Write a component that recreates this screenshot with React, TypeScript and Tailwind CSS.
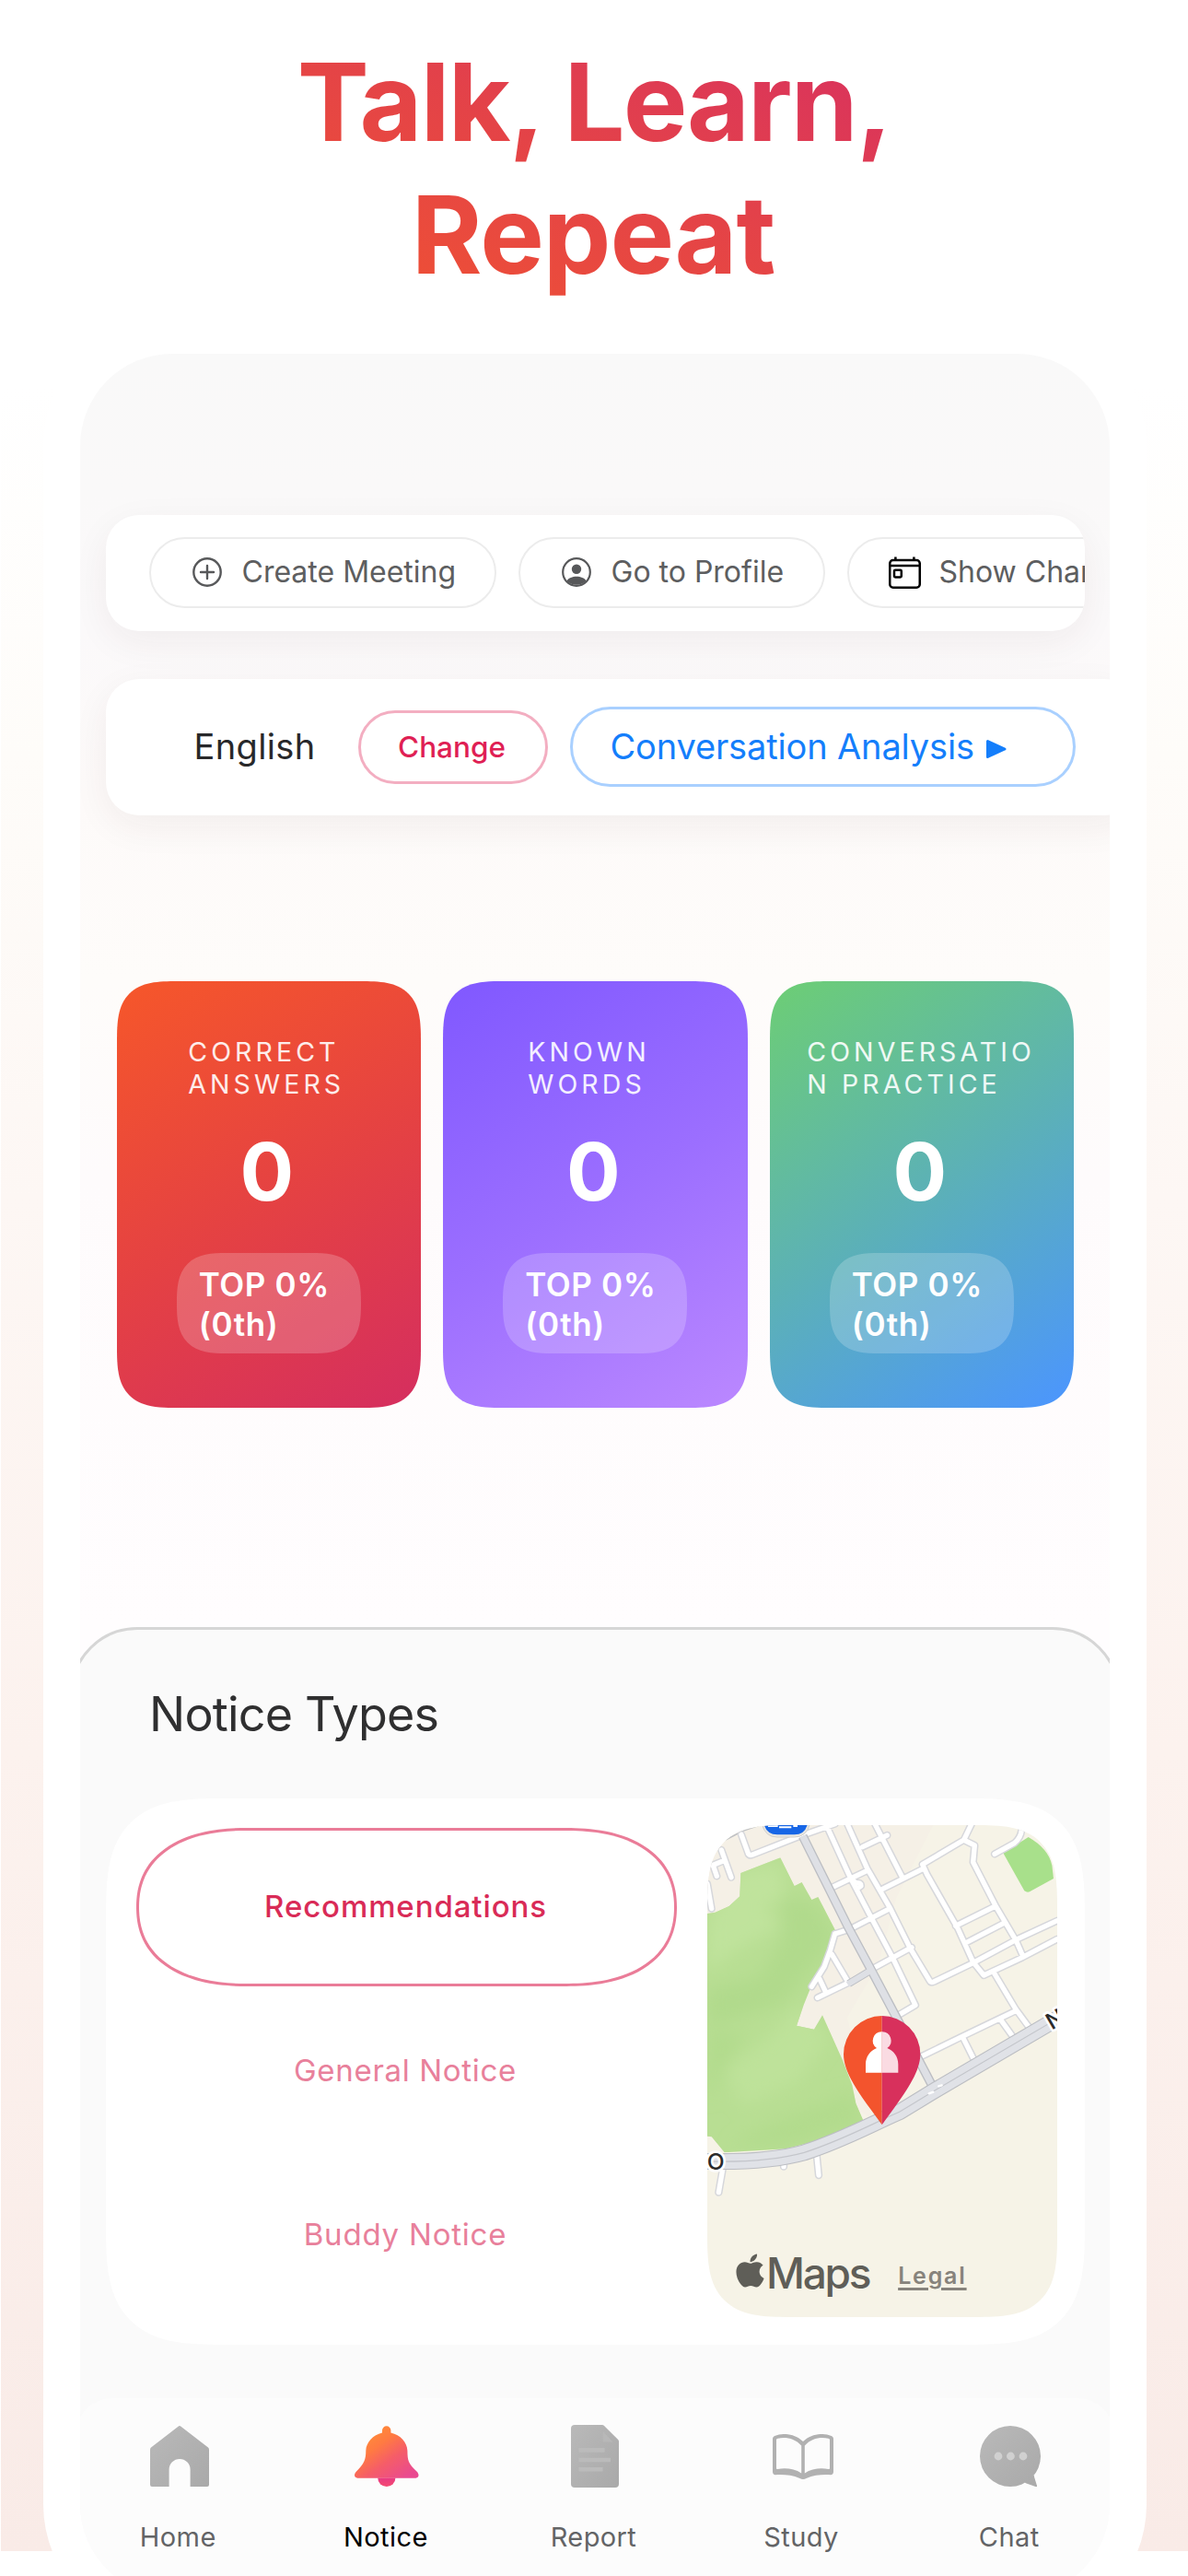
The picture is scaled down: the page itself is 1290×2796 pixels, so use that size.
import React, { type ReactNode } from 'react';
import { FaApple } from 'react-icons/fa';

const GRAY_STOPS = (
  <>
    <stop offset="0" stopColor="#b9b9b9" />
    <stop offset="1" stopColor="#a9a9a9" />
  </>
);

function PlusCircle() {
  return (
    <svg viewBox="0 0 32 32" className="size-8 shrink-0" fill="none" stroke="#57585a" strokeWidth="2.4">
      <circle cx="16" cy="16" r="14.7" />
      <path d="M16 9v14M9 16h14" strokeLinecap="round" />
    </svg>
  );
}

function ProfileCircle() {
  return (
    <svg viewBox="0 0 32 32" className="size-8 shrink-0">
      <circle cx="16" cy="16" r="14.8" fill="none" stroke="#57585a" strokeWidth="2.2" />
      <circle cx="16" cy="12.8" r="5.2" fill="#57585a" />
      <path d="M5.500 25.400C7.400 22.400 11.600 20.800 16 20.800s8.600 1.600 10.500 4.600A14.800 14.800 0 0 1 5.500 25.400z" fill="#57585a" />
    </svg>
  );
}

function CalendarIcon() {
  return (
    <svg viewBox="0 0 35 35" className="size-[35px] shrink-0" fill="none" stroke="#000" strokeWidth="2.5">
      <rect x="1.250" y="4" width="32.500" height="29.700" rx="3.500" />
      <path d="M1.500 10h32M7.400.5V4M27.400.5V4" />
      <rect x="6" y="14.800" width="7.800" height="7.600" rx="1.200" />
    </svg>
  );
}

function HomeIcon() {
  return (
    <svg viewBox="0 0 64 66" className="h-[66px] w-16">
      <defs>
        <linearGradient id="home" x1="0" y1="0" x2="1" y2="1">{GRAY_STOPS}</linearGradient>
      </defs>
      <path
        fill="url(#home)"
        d="M30.500.800a2.200 2.200 0 0 1 3 0L63 23.500q1 .8 1 2.500V64q0 2-2 2H43.600V47.500a11.500 11.500 0 0 0-23 0V66H2q-2 0-2-2V26q0-1.700 1-2.500z"
      />
    </svg>
  );
}

function BellIcon() {
  return (
    <svg viewBox="0 0 70 66" className="h-[66px] w-[70px]">
      <defs>
        <linearGradient id="bell" x1="0.15" y1="0.15" x2="0.85" y2="0.95">
          <stop offset="0" stopColor="#ff8d38" />
          <stop offset="0.3" stopColor="#ff7a42" />
          <stop offset="0.6" stopColor="#f55d68" />
          <stop offset="1" stopColor="#e94a90" />
        </linearGradient>
        <linearGradient id="clapper" x1="0" y1="0" x2="0" y2="1">
          <stop offset="0" stopColor="#e83a82" />
          <stop offset="1" stopColor="#f54a72" />
        </linearGradient>
      </defs>
      <path d="M25.200 56.500h19.200a9.600 9.500 0 0 1-19.200 0z" fill="url(#clapper)" />
      <path
        fill="url(#bell)"
        d="M30 7.600V5a4.700 4.700 0 0 1 9.400 0v2.600C50 10 57 18 57.400 27c.1 11 1.100 14 10.100 22.500 3.500 3.500 2 7.200-1 7.200H3.200C0 56.700-1.500 53 2 49.500 10.500 41 12.200 37 12.300 27 12.600 18 20 10 30 7.600z"
      />
    </svg>
  );
}

function ReportIcon() {
  return (
    <svg viewBox="0 0 52 68" className="h-[68px] w-[52px]">
      <defs>
        <linearGradient id="doc" x1="0" y1="0" x2="1" y2="1">{GRAY_STOPS}</linearGradient>
      </defs>
      <path fill="url(#doc)" d="M4 0h30q1 0 1.800.700L51.200 16q.8.800.8 2v46q0 4-4 4H4q-4 0-4-4V4q0-4 4-4z" />
      <path fill="#bbb" fillOpacity=".7" d="M34.700 7v11.500h10.800z" />
      <path stroke="#bbb" strokeWidth="4.600" d="M8.500 27.400h28M8.500 38h34.500M8.500 48.200h26" />
    </svg>
  );
}

function StudyIcon() {
  return (
    <svg viewBox="0 0 66 49" className="h-[49px] w-[66px]">
      <path
        fill="#b1b1b1"
        fillRule="evenodd"
        d="M0 5c0-1.500 1-2.400 2.200-3C12-1.800 24-.500 33 8 42-.500 54-1.800 63.800 2 65 2.600 66 3.500 66 5v36c0 2-1.200 3.200-3 3.200-9-.4-18 0-26.500 3.800-2 1.200-5 1.200-7 0C21 44.200 12 43.800 3 44.200 1.200 44.200 0 43 0 41zM4 6.500V37c0 .6.500 1.100 1.500 1C14 36.500 24 37.500 31.200 42.500v-30C24 4.500 14 2.800 5.500 4.800 4.600 5 4 5.500 4 6.500zM62 6.500V37c0 .6-.5 1.100-1.500 1-8.500-1.500-18.500-.500-25.700 4.500v-30C42 4.500 52 2.800 60.500 4.800 61.400 5 62 5.500 62 6.500z"
      />
    </svg>
  );
}

function ChatIcon() {
  return (
    <svg viewBox="0 0 66 66" className="size-[66px]">
      <defs>
        <linearGradient id="chat" x1="0" y1="0" x2="1" y2="1">{GRAY_STOPS}</linearGradient>
      </defs>
      <path
        fill="url(#chat)"
        d="M33 0A33 33 0 1 1 33 66 33 33 0 0 1 33 0zM59.200 53.500q-.4 1.500 0 2.500l2.800 9q.3 1.500-1.200 1.100L50.500 62.400l-2-.800z"
      />
      <g fill="#d0d0d0">
        <circle cx="20" cy="33" r="4.400" />
        <circle cx="33.400" cy="33" r="4.400" />
        <circle cx="47" cy="33" r="4.400" />
      </g>
    </svg>
  );
}

const STREETS =
  'M195 95L218 158Q222 164 232 160L385 100 500 60' +
  'M130 145L162 234M100 195L142 178M103 195L115 230M84 255L98 336' +
  'M470 60L550 235 610 350 690 500 762 650 706 683' +
  'M540 60L605 205 680 335 745 465 808 570Q812 578 822 574L945 515 1090 437 1224 375' +
  'M630 60L720 235M590 135L670 97M488 268L605 212M655 272L785 207' +
  'M785 192L920 112 945 60' +
  'M785 192L800 225 900 400 950 510 985 553 1110 495 1224 435' +
  'M925 115L955 130 950 185 1025 330 1090 440 1112 490' +
  'M893 392L1022 328M925 448L1050 383' +
  'M1020 158L1085 122Q1105 105 1108 80' +
  'M500 418L548 403 680 335M625 530L750 462' +
  'M500 418L485 470 465 525 424 590M490 485L540 570M450 565L470 608M443 626L542 578' +
  'M1020 548L1090 665 1132 722M780 818L915 752 1090 668M915 752L950 822M1038 695L1076 748' +
  'M555 240L568 252Q585 250 585 262L576 268' +
  'M135 1180L121 1260M440 1135L447 1204M333 1160V1176';

const HIGHWAY = 'M60 1158C200 1163 320 1152 400 1130C520 1092 620 1037 710 998L830 925 1240 685';

function MapPreview() {
  return (
    <div className="relative h-[534px] w-[380px] overflow-hidden rounded-[90px] bg-[#f6f3e7] [corner-shape:superellipse(1.6)]">
      <svg viewBox="84 64 1140 1602" className="block size-full">
        <defs>
          <filter id="soft" x="-20%" y="-20%" width="140%" height="140%">
            <feGaussianBlur stdDeviation="26" />
          </filter>
          <clipPath id="park">
            <path d="M84 352L110 348 155 328 190 296 193 220 322 170 368 262 392 250 424 307 445 298 504 412 485 470 465 525 418 600 398 650 375 717 432 729 459 683 525 830 556 910 568 970 594 1030 470 1085 340 1118 140 1130 98 1079 84 1077z" />
          </clipPath>
        </defs>
        <path fill="#f5f0e6" d="M84 64H820L700 300 640 520 540 690 620 1020 520 960 200 600 84 360z" />
        <g clipPath="url(#park)">
          <rect x="84" y="160" width="520" height="980" fill="#b8de93" />
          <g filter="url(#soft)">
            <path fill="#c0e39c" d="M190 210L320 190 340 300 260 330 330 390 180 470 84 540V380z" />
            <path fill="#b1da8c" d="M330 290L440 320 500 430 400 560 340 640 160 700 84 720V600L250 560 330 440z" />
            <path fill="#bee29a" d="M380 650L480 760 380 900 200 980 140 860 280 760z" />
            <path fill="#b2db8d" d="M84 740L210 740 120 900 84 960zM380 1000L560 930 590 1040 330 1110 160 1110 240 1060z" />
          </g>
        </g>
        <path fill="#a8e08b" d="M1048 155L1130 103Q1195 140 1207 195L1212 238 1134 281Q1126 285 1117 278z" />
        <g fill="none" strokeLinejoin="round">
          <path d="M84 140Q150 110 200 82L270 58" stroke="#bfc1c5" strokeWidth="6" />
          <path d={STREETS} stroke="#d6d7db" strokeWidth="25" strokeLinecap="round" />
          <path d={STREETS} stroke="#fff" strokeWidth="16" strokeLinecap="round" />
          <path d="M545 580L615 538" stroke="#bcbec3" strokeWidth="25" />
          <path d="M395 100L545 400 615 530 700 690 818 915" stroke="#bcbec3" strokeWidth="30" />
          <path d="M541 582L615 538" stroke="#dee0e5" strokeWidth="19" />
          <path d="M395 100L545 400 615 530 700 690 818 915" stroke="#dee0e5" strokeWidth="22" />
          <path d={HIGHWAY} stroke="#bcbec3" strokeWidth="54" />
          <path d={HIGHWAY} stroke="#e0e2e7" strokeWidth="47" />
          <path d={HIGHWAY} stroke="#c4c6cb" strokeWidth="3.500" />
          <path d="M806 938L820 933M838 914L848 911" stroke="#fff" strokeWidth="7" strokeLinecap="round" />
        </g>
        <path d="M262 60H418Q408 103 368 103H312Q272 103 262 60z" fill="#e9e7e2" stroke="#d2d0cc" strokeWidth="3" />
        <path d="M268 60H411Q402 95 368 95H312Q278 95 268 60z" fill="#1766e6" />
        <path d="M282 67h32M318 71h40M364 67h14" stroke="#fff" strokeWidth="6" />
        <g
          fontFamily="Inter, sans-serif"
          fontWeight="500"
          fontSize="74"
          fill="#2b2b2b"
          stroke="#fff"
          strokeWidth="16"
          strokeLinejoin="round"
          paintOrder="stroke"
        >
          <text x="83" y="1185">O</text>
          <text x="1206" y="732" transform="rotate(-30 1206 732)">N</text>
        </g>
        <path fill="#f3542d" d="M653 685A125 125 0 0 0 528 810C528 880 600 965 653 1040z" />
        <path fill="#d8305c" d="M653 685A125 125 0 0 1 778 810C778 880 706 965 653 1040z" />
        <path fill="#fff" d="M653 737a29 29 0 0 0-17 53C615 798 600 818 600 843v27h53z" />
        <path fill="#fadbe2" d="M653 737a29 29 0 0 1 17 53C691 798 706 818 706 843v27h-53z" />
      </svg>
      <div className="absolute bottom-6 left-[31px] flex h-12 items-center">
        <FaApple className="h-[41px] w-[31px] -translate-y-[3px] text-[#5f5e58]" />
        <span className="ml-[2px] text-[46px] leading-none font-medium tracking-[-2.3px] text-[#5f5e58]">Maps</span>
        <span className="mt-[7px] ml-[31px] text-[25px] leading-none font-semibold tracking-[1.8px] text-[#87837c] underline decoration-[3px] underline-offset-[4px]">
          Legal
        </span>
      </div>
    </div>
  );
}

function Chip({ icon, label, className }: { icon: ReactNode; label: string; className: string }) {
  return (
    <div
      className={`flex h-[77px] shrink-0 items-center rounded-full border-2 border-[#ececec] text-[32px] whitespace-nowrap text-[#5d5e60] ${className}`}
    >
      {icon}
      <span>{label}</span>
    </div>
  );
}

const STATS = [
  { lines: ['CORRECT', 'ANSWERS'], width: 'w-[175px]', fill: 'bg-linear-[150deg] from-[#f6572a] via-[#e54242] to-[#d52e5f]' },
  { lines: ['KNOWN', 'WORDS'], width: 'w-[146px]', fill: 'bg-linear-[150deg] from-[#8058ff] via-[#9b6eff] to-[#bb88ff]' },
  { lines: ['CONVERSATIO', 'N PRACTICE'], width: 'w-[249px]', fill: 'bg-linear-[145deg] from-[#6dce74] via-[#5cb1b6] to-[#4b95ff]' },
];

function StatCard({ lines, width, fill }: (typeof STATS)[number]) {
  return (
    <div
      className={`flex h-[463px] w-[330.5px] flex-col items-center rounded-[66px] pt-[60px] text-white [corner-shape:superellipse(1.6)] ${fill}`}
    >
      <div className={`text-[28.5px] leading-[34.7px] tracking-[4.1px] whitespace-nowrap text-white/90 ${width}`}>
        {lines[0]}
        <br />
        {lines[1]}
      </div>
      <div className="mt-[30px] mr-[4px] text-[87px] leading-[96px] font-bold">0</div>
      <div className="mt-[40px] h-[109px] w-[200px] rounded-[54px] bg-white/20 pt-[13px] pl-[24px] text-[35px] leading-[42.3px] font-semibold tracking-[0.6px] whitespace-nowrap [corner-shape:superellipse(1.5)]">
        TOP 0%
        <br />
        (0th)
      </div>
    </div>
  );
}

const TABS = [
  { label: 'Home', icon: <HomeIcon />, active: false },
  { label: 'Notice', icon: <BellIcon />, active: true },
  { label: 'Report', icon: <ReportIcon />, active: false },
  { label: 'Study', icon: <StudyIcon />, active: false },
  { label: 'Chat', icon: <ChatIcon />, active: false },
];

export default function App() {
  return (
    <main className="flex h-[2796px] w-[1290px] flex-col items-center overflow-hidden bg-[linear-gradient(to_bottom,#fff_0px,#fff_420px,#fefcf9_820px,#fdf7f4_1300px,#fcf2ee_1900px,#f9ebe7_2769px,#fff_2769px)] font-['Inter',sans-serif] shadow-[inset_1px_0_0_#fff]">
      <h1 className="mt-[39px] h-[305px] shrink-0 text-center text-[117px] leading-[143.6px] font-bold whitespace-nowrap">
        <span className="inline-block bg-linear-to-tr from-[#f0522f] via-[#e44347] to-[#d82f5f] bg-clip-text text-transparent">
          <span className="tracking-[-1.75px]">Talk, Learn,</span>
          <br />
          <span className="mr-[2px] tracking-[-1px]">Repeat</span>
        </span>
      </h1>

      <div className="ml-[2px] h-[2514px] w-[1198px] shrink-0 rounded-[140px] bg-white p-10">
        <div className="flex h-[2434px] flex-col overflow-hidden rounded-[100px] bg-[linear-gradient(to_bottom,#f9f9f9_0px,#faf9f9_150px,#fbf9fa_300px,#fdfaf9_480px,#fefcfa_680px,#fefbfc_900px,#fffdfe_1380px)]">
          <div className="mt-[175px] ml-[27.5px] flex h-[126px] w-[1063.5px] shrink-0 items-center gap-6 overflow-hidden rounded-[36px] bg-white pb-[2px] pl-[47px] shadow-[0_12px_40px_rgba(60,40,30,0.06)]">
            <Chip icon={<PlusCircle />} label="Create Meeting" className="w-[377px] gap-[22px] pl-[45px]" />
            <Chip icon={<ProfileCircle />} label="Go to Profile" className="w-[333px] gap-[22px] pl-[45px]" />
            <Chip icon={<CalendarIcon />} label="Show Chart" className="w-[320px] gap-[20px] pl-[43px]" />
          </div>

          <div className="mt-[52px] ml-[27.5px] flex h-[148px] w-[1120px] shrink-0 items-center rounded-[36px] bg-white pb-px pl-[96px] shadow-[0_12px_40px_rgba(60,40,30,0.06)]">
            <span className="w-[178px] text-[38px] tracking-[0.37px] text-[#28282a]">English</span>
            <span className="flex h-20 w-[206px] items-center justify-center rounded-full border-[3px] border-[#f3aec1] pr-[2px] text-[31.5px] font-[450] text-[#df1f54]">
              Change
            </span>
            <span className="ml-6 flex h-[87px] w-[549px] items-center rounded-full border-[3px] border-[#a9d0ff] pl-[41px] text-[38px] tracking-[-0.15px] whitespace-nowrap text-[#147efb]">
              Conversation Analysis
              <svg viewBox="0 0 22 22" className="mt-[5px] ml-[13px] size-[22px]" fill="currentColor">
                <path
                  d="M1.500 2.500L20 11 1.500 19.500z"
                  stroke="currentColor"
                  strokeWidth="3"
                  strokeLinejoin="round"
                />
              </svg>
            </span>
          </div>

          <section className="mt-[180px] ml-[39.5px] flex shrink-0 gap-6">
            {STATS.map((s) => (
              <StatCard key={s.lines[0]} {...s} />
            ))}
          </section>

          <section className="mt-[238px] -ml-[11px] h-[1100px] w-[1140px] shrink-0 rounded-t-[73px] border-[3px] border-[#d6d6d6] bg-[#fafafa]">
            <h2 className="mt-[60px] ml-[83px] text-[52px] leading-[64px] tracking-[-0.8px] text-[#2f2f30]">Notice Types</h2>

            <div className="mt-[59px] ml-[36px] flex h-[593px] w-[1063px] justify-between rounded-[130px] bg-white pr-[30px] pl-[33px] [corner-shape:superellipse(1.6)]">
              <div className="mt-8 flex w-[587px] flex-col gap-[7px] text-center text-[33px] leading-[165px]">
                <div className="h-[172px] rounded-[120px/86px] border-[3px] border-[#ea7c98] pr-[2px] font-medium tracking-[0.9px] text-[#d92b57] [corner-shape:superellipse(1.2)]">
                  Recommendations
                </div>
                <div className="h-[171px] pt-[2px] pr-[3px] tracking-[0.68px] text-[#e8809b]">General Notice</div>
                <div className="h-[171px] pt-[2px] pr-[3px] tracking-[0.8px] text-[#e8809b]">Buddy Notice</div>
              </div>
              <div className="mt-[29px]">
                <MapPreview />
              </div>
            </div>

            <nav className="mt-[58px] ml-[3px] flex h-[230px] w-[1128px] rounded-t-[40px] bg-[#fcfcfc]">
              {TABS.map((t) => (
                <div key={t.label} className="flex flex-1 flex-col items-center pt-[27px]">
                  <div className="flex h-[72px] items-center">{t.icon}</div>
                  <span
                    className={`mt-[34px] mr-[3px] text-[29px] leading-[36px] tracking-[0.4px] ${t.active ? 'text-black' : 'text-[#636466]'}`}
                  >
                    {t.label}
                  </span>
                </div>
              ))}
            </nav>
          </section>
        </div>
      </div>
    </main>
  );
}
